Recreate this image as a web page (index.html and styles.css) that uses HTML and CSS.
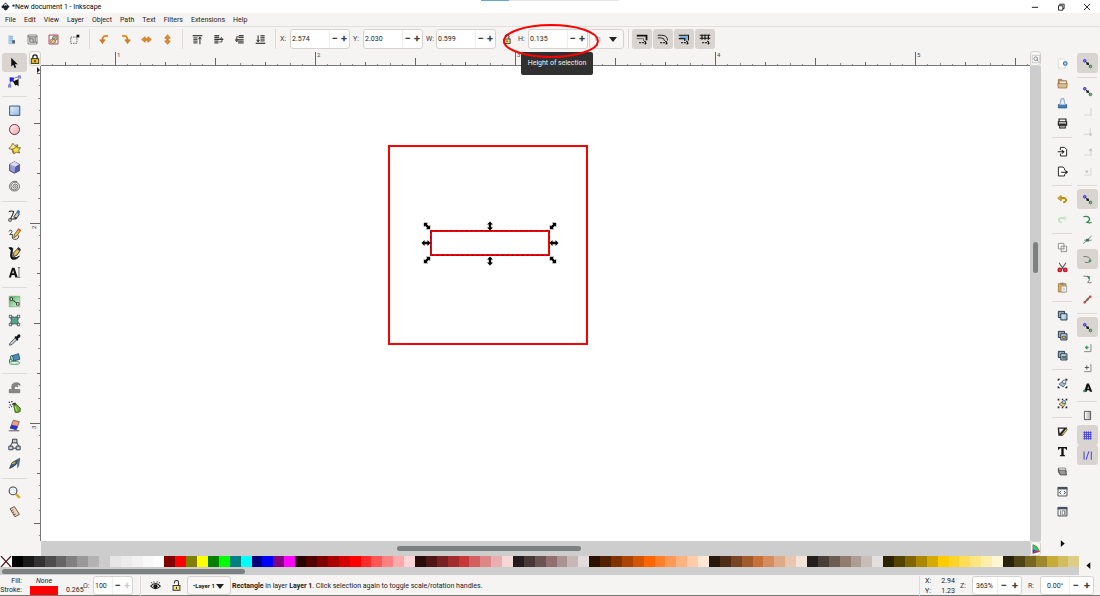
FILE: index.html
```html
<!DOCTYPE html>
<html lang="en">
<head>
<meta charset="utf-8">
<title>*New document 1 - Inkscape</title>
<link rel="stylesheet" href="styles.css">
<script src="palette.js" defer></script>
</head>
<body>
<svg class="defs" aria-hidden="true">
  <defs>
    <linearGradient id="gb" x2="1" y2="1"><stop offset="0" stop-color="#eaf3fb"/><stop offset="1" stop-color="#8fb6dd"/></linearGradient>
    <linearGradient id="gp" x2="1" y2="1"><stop offset="0" stop-color="#fff0f2"/><stop offset="1" stop-color="#f0a3ad"/></linearGradient>
    <linearGradient id="gg" x2="1" y2="1"><stop offset="0" stop-color="#3fae49"/><stop offset="1" stop-color="#f2faf2"/></linearGradient>
    <linearGradient id="gw" x2="1"><stop offset="0" stop-color="#fff"/><stop offset="1" stop-color="#aaa"/></linearGradient>
  </defs>
  <symbol id="snap" viewBox="0 0 16 16"><path d="M4 4l8 8" stroke="#222" stroke-width="1.400"/><rect x="6.500" y="6.500" width="3.400" height="3.400" fill="#111"/><circle cx="4" cy="4" r="1.900" fill="#7d7df2" stroke="#3030d8" stroke-width="1.400"/><circle cx="12.300" cy="12.300" r="1.900" fill="#6fb588" stroke="#2b7c4a" stroke-width="1.400"/></symbol>
  <symbol id="padlock" viewBox="0 0 16 16"><path d="M4.500 8V5a3.500 3.500 0 017 0v3" fill="none" stroke="#222" stroke-width="2"/><rect x="2" y="7.500" width="12" height="7.500" fill="#f0c419" stroke="#222" stroke-width="1.400"/><path d="M8 9.500v3.500" stroke="#222" stroke-width="2"/></symbol>
  <symbol id="unlocked" viewBox="0 0 16 16"><path d="M5 5V4a3 3 0 016-.5V9" fill="none" stroke="#333" stroke-width="1.600"/><rect x="3" y="8" width="10" height="7" fill="#f3e37c" stroke="#333" stroke-width="1.400"/><path d="M8 10v3" stroke="#333" stroke-width="1.600"/></symbol>
</svg>

<header class="titlebar">
  <svg class="logo" viewBox="0 0 16 16"><path d="M8 1l7 7q.6 1.500-2 2l-2 1 2 1-2 1.500-3 1.600-3-1.600 1-1.500-4-1.500Q.4 9.300 1 8z" fill="#18222e"/><path d="M8 2.500l3 3-1.500 1-1.500-1-1.500 1.500L5 5.500z" fill="#dfe8ef"/></svg>
  <h1>*New document 1 - Inkscape</h1>
  <div class="window-buttons">
    <button aria-label="Minimize"><svg viewBox="0 0 16 16"><path d="M3 8.500h10" stroke="#222" stroke-width="1.600"/></svg></button>
    <button aria-label="Restore"><svg viewBox="0 0 16 16"><path d="M4 6h7v7H4zM6 5.500V3.500h7v7h-2" fill="none" stroke="#222" stroke-width="1.500"/></svg></button>
    <button aria-label="Close"><svg viewBox="0 0 16 16"><path d="M3 3l10 10M13 3L3 13" stroke="#222" stroke-width="1.500"/></svg></button>
  </div>
  <span class="edge-strip"></span>
</header>

<nav class="menubar">
  <button>File</button><button>Edit</button><button>View</button><button>Layer</button><button>Object</button><button>Path</button><button>Text</button><button>Filters</button><button>Extensions</button><button>Help</button>
</nav>

<div class="toolbar">
  <button aria-label="Select all"><svg viewBox="0 0 16 16"><path d="M3 2h7v12H3z" fill="#b9d7ef"/><path d="M5 4h5M5 7h5M5 10h4" stroke="#6c9cc4"/><path d="M9 9h4v5H9z" fill="#48637c"/><path d="M4 14h9" stroke="#8aa"/></svg></button>
  <button aria-label="Select all in all layers"><svg viewBox="0 0 16 16"><path d="M1.500 1.500h13v13h-13z" fill="#fff" stroke="#555"/><path d="M4 4h8v8H4z" fill="#ccc" stroke="#444"/><path d="M4 7h5v5M1 4h3M12 4h3M12 12h3" fill="none" stroke="#555"/></svg></button>
  <button aria-label="Deselect"><svg viewBox="0 0 16 16"><path d="M1.500 1.500h13v13h-13z" fill="#fff" stroke="#b33b4b" stroke-width="1.400"/><circle cx="10" cy="6" r="3.500" fill="#a9cf9b" stroke="#555"/><path d="M4 8l5-1 2 5-5 2-3-3z" fill="#f0d27a" stroke="#555"/><path d="M2 14L14 2" stroke="#c55"/></svg></button>
  <button aria-label="Toggle selection box"><svg viewBox="0 0 16 16"><path d="M2.500 4.500h9v9h-9z" fill="none" stroke="#444" stroke-width="1.300" stroke-dasharray="2 1.600"/><path d="M11 1h4v4h-4z" fill="#111"/></svg></button>
  <i class="vsep"></i>
  <button aria-label="Rotate left"><svg viewBox="0 0 16 16"><path d="M13 3Q5 1 5 9" fill="none" stroke="#de7f18" stroke-width="2.600"/><path d="M1 8.500h8L5 14z" fill="#de7f18" stroke="#a95d0c" stroke-width=".7"/></svg></button>
  <button aria-label="Rotate right"><svg viewBox="0 0 16 16"><path d="M3 3q8-2 8 6" fill="none" stroke="#de7f18" stroke-width="2.600"/><path d="M7 8.500h8L11 14z" fill="#de7f18" stroke="#a95d0c" stroke-width=".7"/></svg></button>
  <button aria-label="Flip horizontal"><svg viewBox="0 0 16 16"><path d="M1 8l5-4v3h4V4l5 4-5 4V9H6v3z" fill="#e9922c" stroke="#b3610b"/></svg></button>
  <button aria-label="Flip vertical"><svg viewBox="0 0 16 16"><path d="M8 1l4 5H9v4h3l-4 5-4-5h3V6H4z" fill="#e9922c" stroke="#b3610b"/></svg></button>
  <i class="vsep"></i>
  <button aria-label="Raise to top"><svg viewBox="0 0 16 16"><path d="M1 2.500h14" stroke="#222" stroke-width="1.600"/><path d="M2 5.500h6M2 8h6M2 10.500h6M2 13h6" stroke="#555" stroke-width="1.800"/><path d="M11.500 15V5M9.500 7.500l2-3 2 3" fill="none" stroke="#222" stroke-width="1.400"/></svg></button>
  <button aria-label="Raise"><svg viewBox="0 0 16 16"><path d="M2 2.500h7M2 5h7M2 10.500h6M2 13h6" stroke="#444" stroke-width="1.800"/><path d="M2 7.700h13" stroke="#222" stroke-width="1.800"/><path d="M9 11.500h4V6M10.500 6.500l2.500-2" fill="none" stroke="#444" stroke-width="1.300"/></svg></button>
  <button aria-label="Lower"><svg viewBox="0 0 16 16"><path d="M7 2.500h7M7 5h7M6 10.500h8M6 13h8" stroke="#444" stroke-width="1.800"/><path d="M2 8h12" stroke="#6d5a2a" stroke-width="1.800"/><path d="M7 4H4v6M2 8.500l2 3 2-3" fill="none" stroke="#333" stroke-width="1.300"/></svg></button>
  <button aria-label="Lower to bottom"><svg viewBox="0 0 16 16"><path d="M1 13.500h14" stroke="#222" stroke-width="1.600"/><path d="M8 2.500h6M8 5h6M8 7.500h6M8 10h6" stroke="#555" stroke-width="1.800"/><path d="M4.500 2v9M2.500 8.500l2 3 2-3" fill="none" stroke="#222" stroke-width="1.400"/></svg></button>
  <i class="vsep"></i>
  <div class="field"><label for="fx">X:</label><span class="spin"><input id="fx" value="2.574"><button aria-label="Decrease X">−</button><button aria-label="Increase X">+</button></span></div>
  <div class="field"><label for="fy">Y:</label><span class="spin"><input id="fy" value="2.030"><button aria-label="Decrease Y">−</button><button aria-label="Increase Y">+</button></span></div>
  <div class="field"><label for="fw">W:</label><span class="spin"><input id="fw" value="0.599"><button aria-label="Decrease width">−</button><button aria-label="Increase width">+</button></span></div>
  <div class="height-group">
    <button aria-label="Lock width and height"><svg class="mini"><use href="#unlocked"/></svg></button>
    <div class="field"><label for="fh">H:</label><span class="spin"><input id="fh" value="0.135"><button aria-label="Decrease height">−</button><button aria-label="Increase height">+</button></span></div>
    <div class="tooltip" role="tooltip">Height of selection</div>
    <svg class="callout" viewBox="0 0 98 36"><ellipse cx="49" cy="18" rx="47" ry="16" fill="none" stroke="#f00" stroke-width="2"/></svg>
  </div>
  <span class="dropdown unit"><select aria-label="Units"><option>in</option></select></span>
  <i class="vsep"></i>
  <div class="toggles">
    <button class="on" aria-label="Scale stroke width"><svg viewBox="0 0 16 16"><path d="M1 3.500h13v6" fill="none" stroke="#111" stroke-width="2.400"/><path d="M1 7.500h9v3" fill="none" stroke="#444"/><path d="M4 13h9M11 10.500l3 2.500-3 2.500" fill="none" stroke="#111" stroke-width="1.400" stroke-dasharray="3 1"/></svg></button>
    <button class="on" aria-label="Scale corner radii"><svg viewBox="0 0 16 16"><path d="M1 3h5q8 0 8 7M1 6.500h4q5 0 5 4" fill="none" stroke="#222" stroke-width="1.300"/><path d="M4 13h9M11 10.500l3 2.500-3 2.500" fill="none" stroke="#111" stroke-width="1.400" stroke-dasharray="3 1"/></svg></button>
    <button class="on" aria-label="Move gradients"><svg viewBox="0 0 16 16"><path d="M2 4h11v6H8V7H2z" fill="#79aee0"/><path d="M1 3h13v7M1 7.500h8v3" fill="none" stroke="#111" stroke-width="1.400"/><path d="M4 13h9M11 10.500l3 2.500-3 2.500" fill="none" stroke="#111" stroke-width="1.400" stroke-dasharray="3 1"/></svg></button>
    <button class="on" aria-label="Move patterns"><svg viewBox="0 0 16 16"><path d="M1 3h14M1 7h14M4 2v7M8 2v7M12.500 2v7" stroke="#111" stroke-width="1.500"/><path d="M4 13h9M11 10.500l3 2.500-3 2.500" fill="none" stroke="#111" stroke-width="1.400" stroke-dasharray="3 1"/></svg></button>
  </div>
</div>

<main class="work">
  <div class="main-column">
    <div class="editor-row">
      <div class="toolbox">
        <button class="on" aria-label="Selector"><svg viewBox="0 0 16 16"><path d="M4 2v11l2.500-2.200 1.600 3.900 2-.9-1.700-3.800H12z" fill="#111"/></svg></button>
        <button aria-label="Node"><svg viewBox="0 0 16 16"><path d="M2 13Q2 4 14 2" fill="none" stroke="#667"/><path d="M2 3h5v5H2z" fill="#2020e0"/><path d="M.5 12h3v3h-3zM12.500 1h3v3h-3z" fill="#9797f4" stroke="#5555c8" stroke-width=".7"/><path d="M6 8l7-3v9l-2-2-2 1z" fill="#111"/></svg></button>
        <hr>
        <button aria-label="Rectangle"><svg viewBox="0 0 16 16"><path d="M2 2.500h12.500v11.500H2z" fill="url(#gb)" stroke="#38537a" stroke-width="1.200"/></svg></button>
        <button aria-label="Ellipse"><svg viewBox="0 0 16 16"><circle cx="8" cy="8" r="6.200" fill="url(#gp)" stroke="#5e3540" stroke-width="1.200"/></svg></button>
        <button aria-label="Star"><svg viewBox="0 0 16 16"><path d="M6 1.500l2 2.800 4-.8-1 3.800 1 3-3 1-3 2-1-4-4-1.300 3-2.700z" fill="#fbef9c" stroke="#6b5a10"/><path d="M10 5l1.500 2.200 3.700-.2-2 3 1 3.500-3.600-1L7 14.500V11L4.500 9l3.500-1z" fill="#f7df57" stroke="#6b5a10"/></svg></button>
        <button aria-label="3D box"><svg viewBox="0 0 16 16"><path d="M8 1l6 3v8l-6 3-6-3V4z" fill="#9c9cd6" stroke="#303060"/><path d="M2 4l6-3 6 3-5 3z" fill="#dcdcf4"/><path d="M9 7l5-3v8l-6 3z" fill="#5a5aa4"/></svg></button>
        <button aria-label="Spiral"><svg viewBox="0 0 16 16"><path d="M8 8a1 1 0 012 0 2 2 0 01-4 0 3 3 0 016 0 4.200 4.200 0 01-8.400 0 5.300 5.300 0 0110.600 0 6.300 6.300 0 01-12.500 0q0-4 4-6 3-1 5.500 0" fill="none" stroke="#555"/></svg></button>
        <hr>
        <button aria-label="Pen"><svg viewBox="0 0 16 16"><path d="M1 3q4-1 6 0-1 5-4 9 5 1 8-1" fill="none" stroke="#222" stroke-width="1.300"/><path d="M1 12h3v3H1z" fill="#eee" stroke="#333"/><path d="M7 10l4-6 3 2-3 5z" fill="#c9cdd2" stroke="#222"/><path d="M10.500 4l1.500-3 3 2-1.500 3z" fill="#2f7cc0"/></svg></button>
        <button aria-label="Pencil"><svg viewBox="0 0 16 16"><path d="M1 4q3-3 4 0 0 2-3 4h4q-2 6 2 6 6 0 5-5" fill="none" stroke="#444" stroke-width="1.200"/><path d="M7 12l1-4 5-7 2.500 2-5 7z" fill="#f2c14e" stroke="#5a4520"/><path d="M12 2l1-1.500 3 2-1 1.500z" fill="#d8542f"/></svg></button>
        <button aria-label="Calligraphy"><svg viewBox="0 0 16 16"><path d="M1 1q4-1 5 1-2 9 0 11 5 1 8-2-3 5-9 4-3-2-1-11z" fill="#111" stroke="#111"/><path d="M7 12V7l5-5 3 2-4 6z" fill="#e9c466" stroke="#222"/><path d="M11 2l2-2 3 3-2 2z" fill="#333"/></svg></button>
        <button aria-label="Text"><svg viewBox="0 0 16 16"><path d="M1 14L5 2h3l4 12H9L8 11H4.500l-.7 3zM5.200 9h2.200L6.300 5z" fill="#111" fill-rule="evenodd"/><path d="M12 2h3M13.500 2v12M12 14h3" stroke="#555" stroke-width=".9"/></svg></button>
        <hr>
        <button aria-label="Gradient"><svg viewBox="0 0 16 16"><path d="M1.500 1.500h13v13h-13z" fill="url(#gg)" stroke="#5aa35f" stroke-width=".7"/><path d="M4 5l8 6" stroke="#222"/><path d="M2.500 3.500h3v3h-3zM10.500 9.500h3v3h-3z" fill="#fff" stroke="#222"/></svg></button>
        <button aria-label="Mesh"><svg viewBox="0 0 16 16"><path d="M3 3q5 2 10 0-2 5 0 10-5-2-10 0 2-5 0-10z" fill="#55a389" stroke="#33475a"/><path d="M1.500 1.500h3v3h-3zM11.500 1.500h3v3h-3zM1.500 11.500h3v3h-3zM11.500 11.500h3v3h-3z" fill="#ddd" stroke="#333" stroke-width=".8"/></svg></button>
        <button aria-label="Dropper"><svg viewBox="0 0 16 16"><path d="M2 15q-1-1 1-3l6-6 2 2-6 6q-2 1-3 1z" fill="#cfd8e2" stroke="#333"/><path d="M8 5l1-1h2q1-3 3-2.500T15 5q-1 1-2.500 1.500V9L11 9.500z" fill="#101820"/></svg></button>
        <button aria-label="Paint bucket"><svg viewBox="0 0 16 16"><ellipse cx="8" cy="13.500" rx="6.500" ry="1.800" fill="#e9f6ea" stroke="#2c8a4b"/><path d="M4 5l9-3 1.500 7L7 11z" fill="#4a8db8" stroke="#22465e"/><ellipse cx="4.800" cy="7.500" rx="1.600" ry="3.200" fill="#b8d8ea" stroke="#22465e" transform="rotate(-15 4.800 7.500)"/><path d="M4 8q-3 1-2 5" fill="none" stroke="#2c8a4b" stroke-width="1.300"/></svg></button>
        <hr>
        <button aria-label="Tweak"><svg viewBox="0 0 16 16"><path d="M1.500 10.500H5Q3 2 10 2q5 0 5 3.500-2-2-4-1 2 1 1 3-2-2-4-.5-1 2 1 3.500h5.500v4h-13z" fill="#888" stroke="#555" stroke-width=".6"/></svg></button>
        <button aria-label="Spray"><svg viewBox="0 0 16 16"><path d="M1 3h1.500M4 2h1.500M2 6h1.500M5 5h1.500M4 8h1M1 9h1" stroke="#222" stroke-width="1.600"/><path d="M7 7l3-2 5 5v4l-3 1.500H9z" fill="#6fae2e" stroke="#2c5412"/><path d="M6 4l3-1 1 2-3 2z" fill="#333"/><path d="M9 8l1.500 5" stroke="#d8f0b0"/></svg></button>
        <button aria-label="Eraser"><svg viewBox="0 0 16 16"><path d="M1 14.500h13" stroke="#333"/><path d="M6.500 1.500l7.500 1.800-4 10-7.500-2z" fill="#f2a07b" stroke="#333" stroke-width=".7"/><path d="M4.500 7l7.800 2L10.200 13.300l-7.700-2z" fill="#2530d8"/></svg></button>
        <button aria-label="Connector"><svg viewBox="0 0 16 16"><path d="M5.500 5l-2.500 5M10.500 5l2.500 5M6 12.500h4" stroke="#333" stroke-width="1.200"/><path d="M5.500 1.500h5.500v4.500H5.500zM1 10h5v4.500H1zM10 10h5v4.500h-5z" fill="#b8cde8" stroke="#222"/></svg></button>
        <button aria-label="LPE"><svg viewBox="0 0 16 16"><path d="M2 14l3-7 7-4-2 6-4 3z" fill="#37648e" stroke="#1c2d3d"/><path d="M11 3l3-2 1 1-1.500 9-2 3z" fill="#526a80"/><path d="M5 8l4-1" stroke="#e8c14a" stroke-width="1.500"/></svg></button>
        <hr>
        <button aria-label="Zoom"><svg viewBox="0 0 16 16"><path d="M10 10l4.500 4.500" stroke="#e0a81d" stroke-width="3"/><circle cx="6.200" cy="6" r="4.800" fill="#e8f1fb" stroke="#444" stroke-width="1.300"/></svg></button>
        <button aria-label="Measure"><svg viewBox="0 0 16 16"><path d="M2.500 4.500L8 2l6 9.500-5.500 3z" fill="#ecd3c4" stroke="#553a2c"/><path d="M4 7l2.500-1M5.500 9.500l2-1M7 12l2.500-1" stroke="#553a2c"/></svg></button>
      </div>

      <div class="canvas-area">
        <button class="corner-lock" aria-label="Lock guides"><svg class="mini"><use href="#padlock"/></svg></button>
        <svg class="ruler-h">
          <defs><pattern id="rh" x="74" width="200" height="15" patternUnits="userSpaceOnUse"><path d="M.5 1v14M100.500 7v8M50.500 11v4M150.500 11v4" stroke="#666"/><path d="M25.500 12v3M75.500 12v3M125.500 12v3M175.500 12v3M12.500 13v2M37.500 13v2M62.500 13v2M87.500 13v2M112.500 13v2M137.500 13v2M162.500 13v2M187.500 13v2" stroke="#888"/></pattern></defs>
          <rect width="100%" height="15" fill="url(#rh)"/>
          <text x="76" y="6">1</text><text x="276" y="6">2</text><text x="476" y="6">3</text><text x="676" y="6">4</text><text x="876" y="6">5</text>
        </svg>
        <button class="corner-zoom" aria-label="Zoom drawing if window is resized"><svg class="mini" viewBox="0 0 16 16"><path d="M2 2h12v12H2z" fill="#fff" stroke="#aaa"/><circle cx="7.500" cy="7.500" r="3" fill="#eee" stroke="#777" stroke-width="1.300"/><path d="M9 9l3 3" stroke="#777" stroke-width="1.300"/></svg></button>
        <svg class="ruler-v">
          <defs><pattern id="rv" y="157" width="12" height="200" patternUnits="userSpaceOnUse"><path d="M2 .5h10M6 100.500h6M9 50.500h3M9 150.500h3" stroke="#666"/><path d="M10 25.500h2M10 75.500h2M10 125.500h2M10 175.500h2M11 12.500h1M11 37.500h1M11 62.500h1M11 87.500h1M11 112.500h1M11 137.500h1M11 162.500h1M11 187.500h1" stroke="#888"/></pattern></defs>
          <rect width="12" height="100%" fill="url(#rv)"/>
          <path d="M9 1l3 3-3 3z" fill="#222"/>
          <text transform="translate(8 163) rotate(-90)">2</text><text transform="translate(8 363) rotate(-90)">3</text>
        </svg>
        <svg class="canvas">
          <defs>
            <path id="arrow" d="M-4.500 0l3-3v1.800h3V-3l3 3-3 3V1.200h-3V3z" fill="#000"/>
          </defs>
          <rect x="348" y="80" width="198" height="198" fill="none" stroke="#f00" stroke-width="2"/>
          <rect x="390" y="165" width="118" height="24" fill="none" stroke="#f00" stroke-width="2"/>
          <rect x="389.500" y="164.500" width="119" height="25" fill="none" stroke="#60103c" stroke-width="1" stroke-dasharray="2 3"/>
          <use href="#arrow" transform="translate(386 160) rotate(45)"/><use href="#arrow" transform="translate(449 160) rotate(90)"/><use href="#arrow" transform="translate(512 160) rotate(-45)"/>
          <use href="#arrow" transform="translate(385 177)"/><use href="#arrow" transform="translate(513 177)"/>
          <use href="#arrow" transform="translate(386 194) rotate(-45)"/><use href="#arrow" transform="translate(449 195) rotate(90)"/><use href="#arrow" transform="translate(512 194) rotate(45)"/>
        </svg>
        <div class="scroll-v"><span class="thumb"></span></div>
        <div class="scroll-h"><span class="thumb"></span></div>
        <button class="cms" aria-label="Color management"><svg class="mini" viewBox="0 0 16 16"><path d="M3 1l4.500 8L3 15z" fill="#22c3e6"/><path d="M3 1q7 1 11 11l-6.500-3z" fill="#27d22d"/><path d="M3 15l4.500-6L14 12z" fill="#e62a3c"/><path d="M3 9h4.500L3 15z" fill="#2b35e0"/><path d="M3 1q7 1 11 11L3 15z" fill="none" stroke="#333" stroke-width=".7"/></svg></button>
      </div>

      <div class="commands">
        <button aria-label="New"><svg viewBox="0 0 16 16"><path d="M2 1.500h8l2 2v11H2z" fill="#fff" stroke="#ccc"/><circle cx="12" cy="8" r="2.600" fill="#bcd6ee" stroke="#2f6ca8" stroke-width="1.600"/></svg></button>
        <button aria-label="Open"><svg viewBox="0 0 16 16"><path d="M2 2h5l1 2h6v10H2z" fill="#b98a55" stroke="#8c6538"/><path d="M4 5h9v4H4z" fill="#eee"/><path d="M1 8h14l-1 6.500H2z" fill="#d9b98e" stroke="#9a7142"/></svg></button>
        <button aria-label="Save"><svg viewBox="0 0 16 16"><path d="M2 9.500h12v5H2z" fill="#3f7fc0" stroke="#284f80"/><path d="M6 1h4l1 6 2 3H3l2-3z" fill="#e7edf5" stroke="#5d82ac"/></svg></button>
        <button aria-label="Print"><svg viewBox="0 0 16 16"><path d="M3 5V1.500h10V5M2 5.500h12v5H2zM4 9h8v5.500H4z" fill="#eee" stroke="#222" stroke-width="1.700"/><path d="M6 12h4" stroke="#222"/></svg></button>
        <hr>
        <button aria-label="Import"><svg viewBox="0 0 16 16"><path d="M5 6V2h6l3 3v9.500H5V11" fill="#fff" stroke="#222" stroke-width="1.400"/><path d="M1 8.500h8M7 6l3 2.500L7 11" fill="none" stroke="#222" stroke-width="1.500"/></svg></button>
        <button aria-label="Export"><svg viewBox="0 0 16 16"><path d="M11 6V4L9 1.500H2v13h9V12" fill="#fff" stroke="#222" stroke-width="1.400"/><path d="M6 9h8M12 6.500L15 9l-3 2.500" fill="none" stroke="#222" stroke-width="1.500"/></svg></button>
        <hr>
        <button aria-label="Undo"><svg viewBox="0 0 16 16"><path d="M5 6h6q3 1 2 4-1 2-4 2" fill="none" stroke="#b8930f" stroke-width="3"/><path d="M1 6l5-4v8z" fill="#dcb420" stroke="#98780a"/></svg></button>
        <button aria-label="Redo" disabled><svg viewBox="0 0 16 16"><path d="M11 6H5q-3 1-2 4 1 2 4 2" fill="none" stroke="#bfe0c2" stroke-width="2.600"/><path d="M15 6l-5-4v8z" fill="#cdeacf"/></svg></button>
        <hr>
        <button aria-label="Copy"><svg viewBox="0 0 16 16"><path d="M2 2h8v8H2zM6 6h8v8H6z" fill="#fff" stroke="#888" stroke-width="1.300"/><path d="M8 9h4M8 11.500h4" stroke="#aaa"/></svg></button>
        <button aria-label="Cut"><svg viewBox="0 0 16 16"><path d="M3 1l6 9M13 1L7 10" stroke="#555" stroke-width="1.500"/><circle cx="4" cy="11.500" r="2.700" fill="#f03040" stroke="#b80f20" stroke-width="1.500"/><circle cx="12" cy="11.500" r="2.700" fill="#f03040" stroke="#b80f20" stroke-width="1.500"/></svg></button>
        <button aria-label="Paste"><svg viewBox="0 0 16 16"><path d="M2 2.500h11v12H2z" fill="#dca95a" stroke="#94672a"/><path d="M5 1h5v3H5z" fill="#888"/><path d="M6 6h8v8.500H6z" fill="#fff" stroke="#888"/><path d="M8 9h4M8 11.500h4" stroke="#999"/></svg></button>
        <hr>
        <button aria-label="Duplicate"><svg viewBox="0 0 16 16"><path d="M2 2h9v9H2z" fill="#8fa4b8" stroke="#2b3b4c" stroke-width="1.400"/><path d="M5.500 5.500h9v9h-9z" fill="url(#gb)" stroke="#2b3b4c" stroke-width="1.400"/></svg></button>
        <button aria-label="Clone"><svg viewBox="0 0 16 16"><path d="M2 2h9v9H2z" fill="#8fa4b8" stroke="#2b3b4c" stroke-width="1.400"/><path d="M5.500 5.500h9v9h-9z" fill="url(#gb)" stroke="#2b3b4c" stroke-width="1.400"/><path d="M7.500 9h5v3h-5z" fill="#f0c23a" stroke="#333"/></svg></button>
        <button aria-label="Unlink clone"><svg viewBox="0 0 16 16"><path d="M2 2h9v9H2z" fill="#8fa4b8" stroke="#2b3b4c" stroke-width="1.400"/><path d="M5.500 5.500h9v9h-9z" fill="url(#gb)" stroke="#2b3b4c" stroke-width="1.400"/><path d="M7.500 9h2v3h-2zM11 9h2v3h-2z" fill="#7fa65c" stroke="#444"/></svg></button>
        <hr>
        <button aria-label="Group"><svg viewBox="0 0 16 16"><path d="M3 9l5-4 5 3-4 5z" fill="#a9bfd6" stroke="#34475c"/><circle cx="10.500" cy="5.500" r="2.500" fill="#e6eef6" stroke="#34475c"/><path d="M1 1h3v1.500H2.500V4H1zM12 1h3v3h-1.500V2.500H12zM1 12h1.500v1.500H4V15H1zM13.500 12H15v3h-3v-1.500h1.500z" fill="#111"/></svg></button>
        <button aria-label="Ungroup"><svg viewBox="0 0 16 16"><path d="M3 9l5-4 5 3-4 5z" fill="#e8cf6f" stroke="#4a4426"/><circle cx="10" cy="6" r="2.500" fill="#b9cadc" stroke="#34475c"/><path d="M1 1h2.500v2.500H1zM12.500 1H15v2.500h-2.500zM1 12.500h2.500V15H1zM12.500 12.500H15V15h-2.500zM7 1h2v2H7zM7 13h2v2H7z" fill="#222"/></svg></button>
        <hr>
        <button aria-label="Fill and stroke"><svg viewBox="0 0 16 16"><path d="M1 2h14L8 14H2z" fill="#222"/><path d="M3 4h7l-6 7z" fill="#f4f4f4"/><path d="M6 13l7-9 2 1-6 8z" fill="#e9d35c" stroke="#222" stroke-width=".8"/></svg></button>
        <button aria-label="Text and font"><svg viewBox="0 0 16 16"><path d="M1.500 1.500h13V5.500h-1.200Q13 3.300 11 3.300H9.700V13l2 .6v1.200H4.300v-1.200l2-.6V3.300H5Q3 3.300 2.700 5.500H1.500z" fill="#111"/></svg></button>
        <button aria-label="Layers"><svg viewBox="0 0 16 16"><path d="M2 3h10l2 6H4z" fill="#fff" stroke="#555"/><path d="M2 6h10l2 7H5z" fill="#999" stroke="#333"/><path d="M2 3v6l3 4" fill="none" stroke="#444"/></svg></button>
        <button aria-label="XML editor"><svg viewBox="0 0 16 16"><path d="M1.500 2h13v12.500h-13z" fill="#fff" stroke="#45525e" stroke-width="1.400"/><path d="M1 1.500h14V5H1z" fill="#45525e"/><path d="M6 7.500L3.500 9.500 6 12M10 7.500l2.500 2-2.500 2.500" fill="none" stroke="#222" stroke-width="1.200"/></svg></button>
        <button aria-label="Align"><svg viewBox="0 0 16 16"><path d="M1.500 2h13v12.500h-13z" fill="#fff" stroke="#45525e" stroke-width="1.400"/><path d="M1 1.500h14V5H1z" fill="#45525e"/><path d="M5 6v8M7.500 7h3.500v6H7.500zM13 6v8" fill="none" stroke="#555"/></svg></button>
        <button class="more" aria-label="More commands"><svg viewBox="0 0 16 16"><path d="M5 2l7 6-7 6z" fill="#111"/></svg></button>
      </div>
    </div>

    <div class="palette">
      <div class="swatches" id="swatches">
        <button class="no-color" aria-label="No color"><svg viewBox="0 0 12 11"><path d="M1 0l10 11M11 0L1 11" stroke="#5c1111" stroke-width="1.200"/></svg></button>
      </div>
      <div class="palette-scroll"><span class="thumb"></span></div>
    </div>
  </div>

  <div class="snapbar">
    <button class="on" aria-label="Enable snapping"><svg><use href="#snap"/></svg></button>
    <hr>
    <button aria-label="Snap bounding boxes"><svg><use href="#snap"/></svg></button>
    <button class="faint" aria-label="Snap to edges"><svg viewBox="0 0 16 16"><path d="M3 13h10V3" fill="none" stroke="#999" stroke-width="1.500"/></svg></button>
    <button class="faint" aria-label="Snap to corners"><svg viewBox="0 0 16 16"><path d="M2 12h10V3" fill="none" stroke="#999" stroke-width="1.500"/><circle cx="12.500" cy="12.500" r="2" fill="#777"/></svg></button>
    <button class="faint" aria-label="Snap edge midpoints"><svg viewBox="0 0 16 16"><path d="M3 13h10V3" fill="none" stroke="#999" stroke-width="1.500"/><circle cx="12.500" cy="6" r="2" fill="#777"/></svg></button>
    <button class="faint" aria-label="Snap box centers"><svg viewBox="0 0 16 16"><path d="M3 13h10V3" fill="none" stroke="#aaa" stroke-width="1.500"/><circle cx="7" cy="8" r="2" fill="#777"/></svg></button>
    <hr>
    <button class="on" aria-label="Snap nodes"><svg><use href="#snap"/></svg></button>
    <button aria-label="Snap to paths"><svg viewBox="0 0 16 16"><path d="M2 4q8-2 9 3 0 4-4 5 4 2 7 0" fill="none" stroke="#2c8a4b" stroke-width="1.800"/></svg></button>
    <button aria-label="Snap to path intersections"><svg viewBox="0 0 16 16"><path d="M2 14L14 3M3 9h11" stroke="#666" stroke-width="1.200"/><path d="M6 7h4v4H6z" fill="#2c7c4a"/></svg></button>
    <button class="on" aria-label="Snap to cusp nodes"><svg viewBox="0 0 16 16"><path d="M2 4q9-2 11 6-4 4-9 2" fill="none" stroke="#777" stroke-width="1.400"/><circle cx="11.500" cy="10" r="2" fill="#3f9a5f"/></svg></button>
    <button aria-label="Snap to smooth nodes"><svg viewBox="0 0 16 16"><path d="M2 3q9 0 9 5-1 3-3 4 4 2 6 0" fill="none" stroke="#777" stroke-width="1.400"/><path d="M7 2l5 2-2 4z" fill="#2c8a4b"/></svg></button>
    <button aria-label="Snap to line midpoints"><svg viewBox="0 0 16 16"><path d="M3 13L13 3" stroke="#b33" stroke-width="2"/><path d="M6.500 6.500h3v3h-3z" fill="#2c8a4b"/><circle cx="4" cy="12" r="1.800" fill="#d44"/><circle cx="12" cy="4" r="1.800" fill="#d44"/></svg></button>
    <hr>
    <button class="on" aria-label="Snap others"><svg><use href="#snap"/></svg></button>
    <button aria-label="Snap object midpoints"><svg viewBox="0 0 16 16"><path d="M3 14h10V3" fill="none" stroke="#888" stroke-width="1.400"/><path d="M4.500 8h5M7 5.500v5" stroke="#2fa05a" stroke-width="2"/></svg></button>
    <button aria-label="Snap rotation centers"><svg viewBox="0 0 16 16"><path d="M3 14h10V3" fill="none" stroke="#888" stroke-width="1.400"/><path d="M4 8h6M7 5v6" stroke="#555" stroke-width="1.400"/></svg></button>
    <button aria-label="Snap text baselines"><svg viewBox="0 0 16 16"><path d="M3 14L7 2h3l5 12h-3.500l-.8-2H7.500L7 14zM8 10h2L9 6z" fill="#111" fill-rule="evenodd"/><circle cx="3.500" cy="13" r="2" fill="#2c9a4b"/></svg></button>
    <hr>
    <button aria-label="Snap to page border"><svg viewBox="0 0 16 16"><path d="M3.500 2h9v12h-9z" fill="url(#gw)" stroke="#444" stroke-width="1.200"/></svg></button>
    <button class="on" aria-label="Snap to grids"><svg viewBox="0 0 16 16"><path d="M3.500 2v12M6.500 2v12M9.500 2v12M12.500 2v12M2 3.500h12M2 6.500h12M2 9.500h12M2 12.500h12" stroke="#3a3ad8" stroke-width="1.200"/></svg></button>
    <button class="on" aria-label="Snap to guides"><svg viewBox="0 0 16 16"><path d="M3 2v12M13.500 2v12M6 14l4-12" stroke="#4646dc" stroke-width="1.500"/></svg></button>
    <button class="more" aria-label="Palette menu"><svg viewBox="0 0 16 16"><path d="M13 2L6 8l7 6z" fill="#111"/></svg></button>
  </div>
</main>

<footer class="status">
  <dl class="style-indicator">
    <dt>Fill:</dt><dd class="none">None</dd><dd></dd>
    <dt>Stroke:</dt><dd class="chip"></dd><dd>0.265</dd>
  </dl>
  <div class="field opacity"><label for="fo">O:</label><span class="spin"><input id="fo" value="100"><button aria-label="Decrease opacity">−</button><button disabled aria-label="Increase opacity">+</button></span></div>
  <i class="vsep"></i>
  <button class="status-icon" aria-label="Toggle layer visibility"><svg viewBox="0 0 16 16"><path d="M1 9q7-8 14 0-7 7-14 0z" fill="#fff" stroke="#222" stroke-width="1.500"/><circle cx="8" cy="9" r="3" fill="#111"/><path d="M3 5L2 3M6 4L5.500 2M10 4l.5-2M13 5l1-2" stroke="#222" stroke-width="1.200"/></svg></button>
  <button class="status-icon" aria-label="Toggle layer lock"><svg><use href="#unlocked"/></svg></button>
  <span class="dropdown layer"><select aria-label="Current layer"><option>•Layer 1</option></select></span>
  <p class="message"><b>Rectangle</b> in layer <b>Layer 1</b>. Click selection again to toggle scale/rotation handles.</p>
  <dl class="coords"><dt>X:</dt><dd>2.94</dd><dt>Y:</dt><dd>1.23</dd></dl>
  <div class="field zoom"><label for="fz">Z:</label><span class="spin"><input id="fz" value="363%"><button aria-label="Zoom out">−</button><button aria-label="Zoom in">+</button></span></div>
  <div class="field rotation"><label for="fr">R:</label><span class="spin"><input id="fr" value="0.00°"><button aria-label="Rotate canvas left">−</button><button aria-label="Rotate canvas right">+</button></span></div>
</footer>
</body>
</html>
```
FILE: styles.css
```css
* { box-sizing: border-box; }

body {
  margin: 0;
  height: 100vh;
  display: flex;
  flex-direction: column;
  overflow: hidden;
  background: #f5f4f2;
  color: #222;
  font: 7px/10px Roboto, "Open Sans", sans-serif;
}

button, input, select {
  font: inherit;
  color: inherit;
  margin: 0;
  padding: 0;
  border: 0;
  background: none;
}

button {
  display: flex;
  align-items: center;
  justify-content: center;
}

h1, p, dl, dd { margin: 0; font-weight: inherit; }
svg { display: block; flex: none; width: 12px; height: 12px; }
.mini { width: 10px; height: 10px; }
.defs { position: absolute; width: 0; height: 0; }
hr { width: 20px; height: 1px; margin: 4px auto 3px; border: 0; background: #dddad7; flex: none; }
.on { background: #d9d4d0; border-radius: 3px; }

/* Title bar */
.titlebar {
  position: relative;
  display: flex;
  align-items: center;
  height: 13px;
  padding-left: 1px;
  gap: 2px;
  background: #fff;
  color: #000;
}
.titlebar h1 { flex: 1; font-size: 7px; }
.titlebar .logo { width: 9px; height: 9px; }
.window-buttons { display: flex; }
.window-buttons button { width: 26px; height: 12px; }
.window-buttons svg { width: 10px; height: 10px; }
.edge-strip {
  position: absolute;
  left: 481px;
  top: 0;
  width: 138px;
  height: 1px;
  background: linear-gradient(90deg, #6aa5c9 28px, #e4e4e4 28px);
}

/* Menus */
.menubar {
  display: flex;
  height: 14px;
  padding-left: 5px;
  gap: 8px;
  border-bottom: 1px solid #e2e0dd;
}

/* Tool controls */
.toolbar {
  display: flex;
  align-items: center;
  height: 24px;
  padding-left: 1px;
}
.toolbar > button, .toggles button { width: 21px; height: 20px; }
.toolbar > button svg { width: 11px; height: 11px; }
.vsep { width: 1px; height: 20px; margin: 0 4px; background: #dddad7; }
.field { display: flex; align-items: center; margin-right: 3px; }
.field label { width: 10px; color: #343a50; }
.spin {
  display: flex;
  width: 60px;
  height: 20px;
  border: 1px solid #d6d2ce;
  border-radius: 3px;
  background: #fff;
}
.spin input { flex: 1; width: 0; min-width: 0; padding-left: 1px; }
.spin button { width: 10px; font-size: 11px; font-weight: 700; color: #3c3c3c; }
.spin button:disabled { color: #ccc; }
.spin input + button { border-left: 1px solid #f0eeec; }
.height-group { position: relative; display: flex; align-items: center; margin-left: -3px; }
.height-group > button { width: 22px; height: 20px; }
.tooltip {
  position: absolute;
  z-index: 2;
  left: 25px;
  top: 23px;
  width: 72px;
  height: 23px;
  line-height: 23px;
  text-align: center;
  white-space: nowrap;
  border-radius: 2px;
  background: #303030;
  color: #f0f0f0;
}
.callout { position: absolute; z-index: 3; left: 6px; top: -6px; width: 98px; height: 36px; pointer-events: none; }
.dropdown {
  position: relative;
  display: flex;
  height: 20px;
  border: 1px solid #d6d2ce;
  border-radius: 3px;
  background: #f8f7f6;
}
.dropdown select { appearance: none; width: 100%; padding-left: 5px; }
.dropdown::after {
  content: "";
  position: absolute;
  right: 6px;
  top: 7px;
  border: 4px solid transparent;
  border-top: 5px solid #222;
  border-bottom: 0;
  pointer-events: none;
}
.unit { width: 35px; margin-left: -2px; color: #8492c4; }
.toggles { display: flex; gap: 1px; margin-left: -1px; }
.toggles button { width: 20px; }

/* Work area */
.work { flex: 1; display: flex; min-height: 0; }
.main-column { flex: 1; min-width: 0; display: flex; flex-direction: column; }
.editor-row { flex: 1; display: flex; min-height: 0; }

.toolbox { width: 28px; padding-top: 2px; }
.toolbox button { width: 25px; height: 19px; margin-left: 2px; }
.toolbox svg { width: 13px; height: 13px; }
.toolbox hr { width: 25px; margin: 5px 0 4px 2px; }

.canvas-area {
  flex: 1;
  min-width: 0;
  display: grid;
  grid-template-columns: 13px 1fr 11px;
  grid-template-rows: 15px 1fr 15px;
}
.corner-lock, .corner-zoom, .cms { border: 1px solid #d6d2ce; border-radius: 3px; background: #f8f7f6; }
.corner-lock { margin-left: 1px; }
.ruler-h { width: 100%; height: 15px; border-bottom: 1px solid #777; }
.ruler-v { width: 13px; height: 100%; border-right: 1px solid #777; }
.ruler-h text, .ruler-v text { font-size: 6px; fill: #444; }
.canvas { width: 100%; height: 100%; background: #fff; }
.scroll-v { background: #cdcdcd; padding: 176px 3px 0; }
.scroll-v .thumb { height: 31px; }
.scroll-h { grid-column: 2; display: flex; align-items: center; background: #cdcdcd; padding-left: 36%; }
.scroll-h .thumb { width: 29%; }
.thumb { display: block; width: 5px; height: 5px; border-radius: 3px; background: #7b8180; }

.commands { width: 36px; padding-top: 2px; }
.commands button { width: 20px; height: 20px; margin-left: 11px; }
.commands svg, .snapbar svg { width: 11px; height: 11px; }
.commands hr { margin-left: 11px; }
.commands .more { margin-top: 12px; }
.commands .more svg, .snapbar .more svg { width: 9px; height: 9px; }

.snapbar { width: 23px; display: flex; flex-direction: column; padding-top: 2px; }
.snapbar button { width: 21px; height: 20px; }
.snapbar hr { margin-left: 0; }
.snapbar .faint { opacity: .35; }
.snapbar .more { margin-top: auto; }

/* Palette */
.swatches { display: flex; height: 11px; margin-right: -2px; }
.swatches button { flex: 1 1 0; height: 11px; }
.swatches .no-color { flex: 0 0 12px; background: #fff; }
.no-color svg { width: 12px; height: 11px; }
.palette-scroll { height: 8px; margin-right: -2px; padding: 2px 2px 0; background: #cdcdcd; }
.palette-scroll .thumb { width: 243px; }

/* Status bar */
.status {
  display: flex;
  align-items: center;
  height: 21px;
  padding-top: 1px;
  border-bottom: 1px solid #777;
}
.style-indicator {
  display: grid;
  grid-template-columns: 22px 28px 18px;
  grid-auto-rows: 9px;
  line-height: 9px;
  column-gap: 8px;
  width: 83px;
}
.style-indicator dt { text-align: right; }
.none { font-style: italic; text-align: center; }
.chip { background: #f00; }
.status .spin { height: 19px; }
.opacity .spin { width: 40px; }
.opacity { margin-right: 3px; }
.status-icon { width: 21px; height: 20px; }
.status-icon svg { width: 11px; height: 11px; }
.layer { width: 44px; height: 19px; margin-right: 1px; font-size: 6px; font-weight: 700; }
.message { flex: 1; white-space: nowrap; }
.coords {
  display: grid;
  grid-template-columns: 10px 20px;
  padding-left: 5px;
  margin-right: 5px;
  border-left: 1px solid #dddad7;
}
.coords dd { text-align: right; }
.zoom, .rotation { margin-right: 6px; }
.zoom label, .rotation label { width: 12px; }
.zoom .spin { width: 50px; }
.rotation .spin { width: 54px; }
.rotation input { padding-left: 6px; }
.zoom input { padding-left: 3px; }
.status .zoom .spin button, .status .rotation .spin button { width: 12px; }
```
FILE: palette.js
```js
const colors = `
000000 1a1a1a 333333 4d4d4d 666666 808080 999999 b3b3b3 cccccc e6e6e6 ececec f2f2f2 f9f9f9 ffffff
800000 ff0000 808000 ffff00 008000 00ff00 008080 00ffff 000080 0000ff 800080 ff00ff
2b0000 550000 800000 aa0000 d40000 ff0000 ff2a2a ff5555 ff8080 ffaaaa ffd5d5
280b0b 501616 782121 a02c2c c83737 d35f5f de8787 e9afaf f4d7d7
241c1c 483737 6c5353 916f6f ac9393 c8b7b7 e3dbdb
2b1100 552200 803300 aa4400 d45500 ff6600 ff7f2a ff9955 ffb380 ffccaa ffe6d5
28170b 502d16 784421 a05a2c c87137 d38d5f deaa87 e9c6af f4e3d7
241f1c 483e37 6c5d53 917c6f ac9d93 c8beb7 e3dedb
2b2200 554400 806600 aa8800 d4aa00 ffcc00 ffd42a ffdd55 ffe680 ffeeaa fff6d5
28220b 504416 786721 a0892c c8ab37 d3bc5f decd87`.trim().split(/\s+/);

const swatches = document.getElementById("swatches");
for (const color of colors) {
  const swatch = document.createElement("button");
  swatch.style.background = "#" + color;
  swatch.setAttribute("aria-label", "#" + color);
  swatches.append(swatch);
}
```
